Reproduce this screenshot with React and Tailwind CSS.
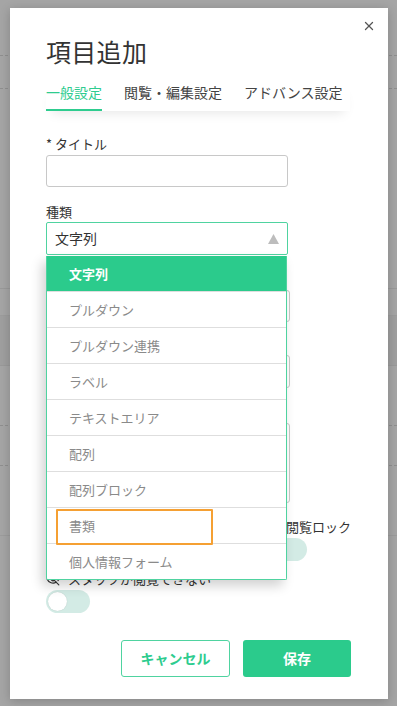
import React from "react";
import { X, EyeOff } from "lucide-react";

const font = { fontFamily: '"Noto Sans CJK JP", "Noto Sans", sans-serif' };

const items = [
  "文字列",
  "プルダウン",
  "プルダウン連携",
  "ラベル",
  "テキストエリア",
  "配列",
  "配列ブロック",
  "書類",
  "個人情報フォーム",
];

function Toggle() {
  return (
    <div className="w-[44px] h-[23px] rounded-full bg-[#d3ebe5] flex items-center px-[2px]">
      <div className="w-[19px] h-[19px] rounded-full bg-white shadow-[0_0_1px_rgba(0,0,0,0.2)]" />
    </div>
  );
}

export default function App() {
  return (
    <div className="relative w-[397px] h-[706px] overflow-hidden bg-[#a5a5a5]" style={font}>
      {/* underlying page (dimmed) */}
      <div className="flex flex-col w-full">
        <div className="h-[56px] border-b border-dashed border-[#8f8f8f]" />
        <div className="h-[33px] border-b border-dashed border-[#8f8f8f]" />
        <div className="h-[200px] border-b border-[#999]" />
        <div className="h-[27px] border-b border-[#9c9c9c]" />
        <div className="h-[50px] bg-[#9f9f9f] border-b border-[#999]" />
        <div className="h-[60px] border-b border-dashed border-[#8f8f8f]" />
        <div className="h-[40px] border-b border-dashed border-[#8f8f8f]" />
        <div className="h-[70px] border-b border-[#9c9c9c]" />
      </div>

      {/* modal */}
      <div className="absolute left-[10px] top-[8px] w-[378px] h-[691px] bg-white shadow-[0_2px_10px_rgba(0,0,0,0.2)]">
        <button className="absolute right-[12px] top-[11px] text-[#555]">
          <X size={14} strokeWidth={2.2} />
        </button>
        <div className="flex flex-col pl-[36px] pr-[37px] pt-[25px]">
          <h2 className="text-[25px] leading-[36px] text-[#333] font-normal tracking-[0.3px]">項目追加</h2>

          <div className="mt-[13px] flex gap-[22px] text-[14px] leading-[20px] shadow-[0_8px_12px_-6px_rgba(0,0,0,0.1)] w-[304px]">
            <div className="pb-[7px] border-b-2 border-[#2ecc8f] text-[#2ecc8f]">一般設定</div>
            <div className="pb-[7px] text-[#444]">閲覧・編集設定</div>
            <div className="pb-[7px] text-[#444]">アドバンス設定</div>
          </div>

          <label className="mt-[23px] text-[13px] leading-[20px] text-[#333]">* タイトル</label>
          <div className="mt-[1px] w-[242px] h-[32px] border border-[#c8c8c8] rounded-[3px]" />

          <label className="mt-[15px] text-[13px] leading-[20px] text-[#333]">種類</label>
          <div className="relative mt-0 w-[242px]">
            <div className="h-[33px] border border-[#4fd3a0] rounded-[2px] flex items-center justify-between pl-[8px] pr-[8px]">
              <span className="text-[14px] text-[#333]">文字列</span>
              <svg width="11" height="10" viewBox="0 0 11 10">
                <polygon points="5.5,0 11,10 0,10" fill="#bdbdbd" />
              </svg>
            </div>

            {/* dropdown list */}
            <div className="absolute left-0 top-[34px] z-10 w-[241px] bg-white border border-[#4fd3a0] border-t-0 rounded-b-[2px] shadow-[-4px_6px_12px_rgba(0,0,0,0.18)] flex flex-col">
              {items.map((t, i) => (
                <div
                  key={t}
                  className={
                    i === 0
                      ? "relative h-[35px] bg-[#2bcb8c] text-white font-bold flex items-center pl-[22px] text-[13px]"
                      : "relative h-[36px] border-t border-[#dedede] text-[#8a8a8a] flex items-center pl-[22px] text-[13px]"
                  }
                >
                  {t}
                  {t === "書類" && (
                    <div className="absolute left-[9px] top-[1px] w-[157px] h-[36px] border-2 border-[#f5a033] rounded-[1px] z-10" />
                  )}
                </div>
              ))}
            </div>
          </div>

          {/* hidden fields behind dropdown */}
          <div className="mt-[35px] w-[244px] h-[32px] border border-[#c8c8c8] rounded-[3px]" />
          <div className="mt-[33px] w-[244px] h-[33px] border border-[#c8c8c8] rounded-[3px]" />
          <div className="mt-[35px] w-[244px] h-[80px] border border-[#c8c8c8] rounded-[3px]" />

          <div className="mt-[14px] flex">
            <div className="w-[218px] flex flex-col">
              <div className="h-[20px]" />
              <div className="mt-[1px]"><Toggle /></div>
            </div>
            <div className="flex flex-col">
              <span className="text-[13px] leading-[20px] text-[#333] ml-[-3px] whitespace-nowrap">一括閲覧ロック</span>
              <div className="mt-[1px]"><Toggle /></div>
            </div>
          </div>

          <div className="mt-[8px] flex items-center gap-[8px] h-[20px]">
            <EyeOff size={14} className="text-[#333]" />
            <span className="text-[13px] text-[#333]">スタッフが閲覧できない</span>
          </div>
          <div className="mt-[1px]"><Toggle /></div>

          <div className="mt-[27px] flex justify-end gap-[13px] pr-0">
            <button className="w-[109px] h-[37px] border border-[#4fd3a0] rounded-[3px] bg-white text-[#2ecc8f] font-bold text-[14px]">キャンセル</button>
            <button className="w-[108px] h-[37px] rounded-[3px] bg-[#2bcb8c] text-white font-bold text-[14px]">保存</button>
          </div>
        </div>
      </div>
    </div>
  );
}
